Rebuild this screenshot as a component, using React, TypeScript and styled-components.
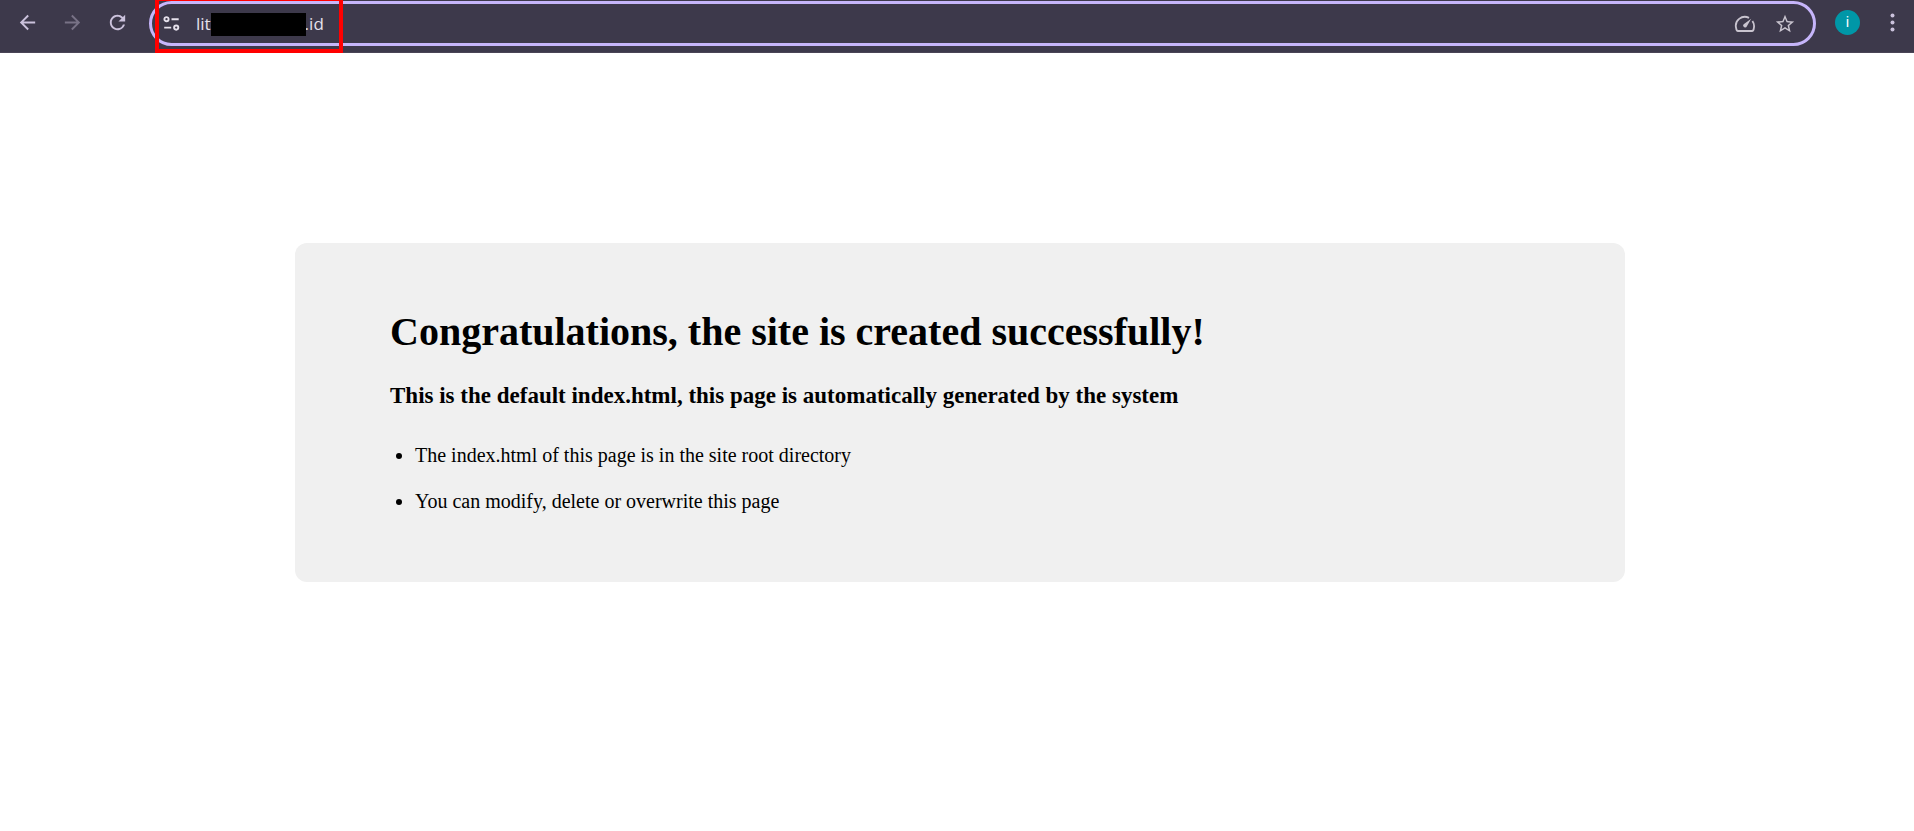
import React from "react";
import styled, { createGlobalStyle } from "styled-components";
import { MdArrowBack, MdArrowForward, MdRefresh, MdStarBorder } from "react-icons/md";

const GlobalStyle = createGlobalStyle`
  body {
    margin: 0;
    background: #ffffff;
  }
`;

const Toolbar = styled.header`
  display: flex;
  align-items: center;
  box-sizing: border-box;
  height: 53px;
  padding: 1px 4px 6px 10px;
  background: #3d394b;
  border-bottom: 1px solid #4a4556;
`;

const NavGroup = styled.nav`
  display: flex;
  gap: 10px;
  margin: 0 14px 2px 0;
`;

const ProfileGroup = styled.div`
  display: flex;
  align-items: center;
  gap: 15px;
  margin: 0 0 2px 19px;
`;

const IconButton = styled.button<{ $color?: string }>`
  display: flex;
  align-items: center;
  justify-content: center;
  flex: none;
  width: 35px;
  height: 35px;
  padding: 0;
  border: 0;
  border-radius: 50%;
  background: transparent;
  color: ${(p) => p.$color ?? "#cbc2dc"};
`;

const AddressBar = styled.div`
  position: relative;
  display: flex;
  align-items: center;
  flex: 1;
  box-sizing: border-box;
  height: 45px;
  padding: 0 11px 0 2px;
  border: 3px solid #c6b5fa;
  border-radius: 23px;
`;

const AddressField = styled.div`
  position: relative;
  display: flex;
  flex: 1;
  margin-left: 7px;
`;

const AddressInput = styled.input`
  flex: 1;
  min-width: 0;
  height: 31px;
  padding: 0;
  border: 0;
  outline: 0;
  background: transparent;
  color: #e6e1ec;
  font: 17px/31px "Open Sans", sans-serif;
`;

const Redaction = styled.span`
  position: absolute;
  top: 5px;
  left: 15px;
  width: 95px;
  height: 23px;
  background: #000000;
`;

const Highlight = styled.span`
  position: absolute;
  top: -6px;
  left: 3px;
  width: 180px;
  height: 48px;
  border: 4px solid #ff0000;
  border-top-width: 3px;
  pointer-events: none;
`;

const PageActions = styled.div`
  display: flex;
  gap: 5px;
`;

const Avatar = styled.button`
  flex: none;
  width: 25px;
  height: 25px;
  padding: 0;
  border: 0;
  border-radius: 50%;
  background: #0097a7;
  color: #ffffff;
  font: 14px/25px Roboto, sans-serif;
`;

const Page = styled.main`
  padding: 0 4px 0 10px;
  color: #000000;
  font: 20px "Liberation Serif", serif;
`;

const Card = styled.section`
  width: 60%;
  margin: 10% auto 0;
  padding: 2% 5%;
  border-radius: 12px;
  background: #f0f0f0;
`;

const Title = styled.h1`
  margin: 28px 0 27px;
  font-size: 40px;
  line-height: 46px;
`;

const Subtitle = styled.h3`
  margin: 0 0 23px;
  font-size: 23px;
  line-height: 27px;
`;

const Notes = styled.ul`
  margin: 0 0 20px;
  padding-left: 25px;
  line-height: 46px;
`;

const TuneIcon = () => (
  <svg width="17" height="15" viewBox="0 0 17 15" fill="none" stroke="currentColor" strokeWidth="1.9">
    <circle cx="3.5" cy="3.2" r="2.1" />
    <path d="M8.5 3.2h7.2M1.2 11.6h7" />
    <circle cx="13.2" cy="11.6" r="2.1" />
  </svg>
);

const SpeedIcon = () => (
  <svg width="22" height="18" viewBox="0 0 22 18" fill="none" stroke="currentColor" strokeWidth="1.8">
    <path d="M15 2.9A9 9 0 0 0 2.2 13.4Q2.4 16 4 16H18Q19.6 16 19.8 13.4A9 9 0 0 0 18.4 6" />
    <path d="M17.2 3.8 12.9 11.2A1.9 1.9 0 1 1 10 8.9Z" fill="currentColor" stroke="none" />
  </svg>
);

const MenuIcon = () => (
  <svg width="5" height="19" viewBox="0 0 5 19" fill="currentColor">
    <circle cx="2.5" cy="2.5" r="2" />
    <circle cx="2.5" cy="9.5" r="2" />
    <circle cx="2.5" cy="16.5" r="2" />
  </svg>
);

const address = "lit" + "\u00a0".repeat(20) + "\u2004.id";

export default function App() {
  return (
    <>
      <GlobalStyle />
      <Toolbar>
        <NavGroup aria-label="History">
          <IconButton aria-label="Back"><MdArrowBack size={23} /></IconButton>
          <IconButton aria-label="Forward" $color="#787286"><MdArrowForward size={23} /></IconButton>
          <IconButton aria-label="Reload"><MdRefresh size={23} /></IconButton>
        </NavGroup>
        <AddressBar>
          <IconButton aria-label="Site information" $color="#e6e1ec"><TuneIcon /></IconButton>
          <AddressField>
            <AddressInput aria-label="Address" defaultValue={address} spellCheck={false} />
            <Redaction />
          </AddressField>
          <PageActions>
            <IconButton aria-label="Performance" $color="#c9c4cf"><SpeedIcon /></IconButton>
            <IconButton aria-label="Bookmark this page" $color="#c9c4cf"><MdStarBorder size={22} /></IconButton>
          </PageActions>
          <Highlight />
        </AddressBar>
        <ProfileGroup>
          <Avatar aria-label="Profile">i</Avatar>
          <IconButton aria-label="Menu"><MenuIcon /></IconButton>
        </ProfileGroup>
      </Toolbar>
      <Page>
        <Card>
          <Title>Congratulations, the site is created successfully!</Title>
          <Subtitle>This is the default index.html, this page is automatically generated by the system</Subtitle>
          <Notes>
            <li>The index.html of this page is in the site root directory</li>
            <li>You can modify, delete or overwrite this page</li>
          </Notes>
        </Card>
      </Page>
    </>
  );
}
